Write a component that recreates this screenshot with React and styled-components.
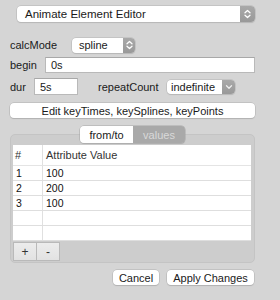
import React from "react";
import styled, { createGlobalStyle } from "styled-components";

const Global = createGlobalStyle`
  html, body { margin: 0; padding: 0; background: #d5d5d5; }
  body { font-family: "Liberation Sans", Arial, sans-serif; font-size: 11px; color: #1a1a1a; }
  * { box-sizing: border-box; }
`;

const Window = styled.div`
  width: 280px;
  height: 300px;
  background: #d5d5d5;
  padding: 5px 25px 0 10px;
  display: flex;
  flex-direction: column;
`;

const Row = styled.div`
  display: flex;
  align-items: center;
  height: ${(p) => p.$h || 17}px;
  margin-top: ${(p) => p.$mt || 0}px;
  padding-left: ${(p) => p.$pl || 0}px;
`;

const Label = styled.span`
  font-size: 11px;
  color: #1a1a1a;
  width: ${(p) => (p.$w ? `${p.$w}px` : "auto")};
  margin-left: ${(p) => p.$ml || 0}px;
  flex-shrink: 0;
`;

const Popup = styled.div`
  position: relative;
  display: flex;
  align-items: stretch;
  width: ${(p) => p.$w}px;
  height: ${(p) => p.$h || 16}px;
  background: #fff;
  border-radius: 4px;
  box-shadow: 0 0 0 0.5px #b4b4b4, 0 1px 1px rgba(0, 0, 0, 0.12);
  overflow: hidden;
`;

const PopupText = styled.span`
  flex: 1;
  display: flex;
  align-items: center;
  padding-left: ${(p) => p.$pl || 8}px;
  font-size: ${(p) => p.$fs || 11}px;
  color: #1a1a1a;
  white-space: nowrap;
`;

const PopupArrow = styled.span`
  width: ${(p) => p.$w || 14}px;
  background: linear-gradient(#a9a9a9, #999);
  display: flex;
  align-items: center;
  justify-content: center;
`;

const Input = styled.div`
  width: ${(p) => p.$w}px;
  height: ${(p) => p.$h || 16}px;
  background: #fff;
  border: 1px solid #b9b9b9;
  border-top-color: #a8a8a8;
  display: flex;
  align-items: center;
  padding-left: 5px;
  font-size: 11px;
  color: #1a1a1a;
  margin-left: ${(p) => p.$ml || 0}px;
`;

const PushButton = styled.div`
  width: ${(p) => p.$w}px;
  height: 15px;
  background: #fff;
  border-radius: 4px;
  box-shadow: 0 0 0 0.5px #b0b0b0, 0 1px 1px rgba(0, 0, 0, 0.15);
  display: flex;
  align-items: center;
  justify-content: center;
  font-size: 11px;
  color: #1a1a1a;
  margin-left: ${(p) => p.$ml || 0}px;
`;

const GroupWrap = styled.div`
  position: relative;
  margin-top: 8px;
  padding-top: 8px;
  width: 245px;
`;

const Segmented = styled.div`
  position: absolute;
  top: 0;
  left: 70px;
  display: flex;
  height: 17px;
  border-radius: 4px;
  overflow: hidden;
  box-shadow: 0 0 0 0.5px #a8a8a8, 0 1px 1px rgba(0, 0, 0, 0.12);
  z-index: 2;
`;

const Seg = styled.div`
  width: ${(p) => p.$w}px;
  display: flex;
  align-items: center;
  justify-content: center;
  font-size: 11px;
  background: ${(p) => (p.$on ? "#fff" : "#a9a9a9")};
  color: ${(p) => (p.$on ? "#1a1a1a" : "#d9d9d9")};
`;

const Group = styled.div`
  height: 129px;
  background: #cdcdcd;
  border: 1px solid #c4c4c4;
  border-radius: 5px;
  padding: 10px 3px 0 2px;
  display: flex;
  flex-direction: column;
`;

const Table = styled.div`
  width: 238px;
  background: #fff;
  display: flex;
  flex-direction: column;
`;

const TRow = styled.div`
  display: grid;
  grid-template-columns: 30px 1fr;
  height: ${(p) => p.$h || 15}px;
  border-bottom: 1px solid ${(p) => (p.$head ? "#e4e4e4" : "#dedede")};
`;

const Cell = styled.div`
  display: flex;
  align-items: center;
  padding-left: ${(p) => p.$pl || 3}px;
  font-size: ${(p) => (p.$head ? 11 : 10.5)}px;
  color: ${(p) => (p.$head ? "#333" : "#111")};
  border-right: ${(p) => (p.$first ? "1px solid #e0e0e0" : "none")};
`;

const Tools = styled.div`
  display: flex;
  margin-top: 1px;
`;

const ToolBtn = styled.div`
  width: ${(p) => p.$w}px;
  height: 19px;
  background: linear-gradient(#ececec, #e2e2e2);
  border: 1px solid #b9b9b9;
  margin-left: ${(p) => p.$ml || 0}px;
  display: flex;
  align-items: center;
  justify-content: center;
  font-size: 12px;
  color: #333;
`;

const Footer = styled.div`
  display: flex;
  justify-content: flex-end;
  width: 244px;
  margin-top: 7px;
`;

const Updown = () => (
  <svg width="7" height="10" viewBox="0 0 7 10">
    <path d="M1 3.8 L3.5 1.5 L6 3.8 M1 6.2 L3.5 8.5 L6 6.2" fill="none" stroke="#fff" strokeWidth="1.3" strokeLinecap="round" strokeLinejoin="round" />
  </svg>
);

const Down = () => (
  <svg width="8" height="6" viewBox="0 0 8 6">
    <path d="M1.5 1.8 L4 4.2 L6.5 1.8" fill="none" stroke="#eee" strokeWidth="1.3" strokeLinecap="round" strokeLinejoin="round" />
  </svg>
);

const rows = [
  ["1", "100"],
  ["2", "200"],
  ["3", "100"],
  ["", ""],
  ["", ""],
];

export default function App() {
  return (
    <>
      <Global />
      <Window>
        <Row $pl={7}>
          <Popup $w={245} $h={16}>
            <PopupText $fs={11.5}>Animate Element Editor</PopupText>
            <PopupArrow $w={15}>
              <Updown />
            </PopupArrow>
          </Popup>
        </Row>
        <Row $mt={15} $h={16}>
          <Label $w={62}>calcMode</Label>
          <Popup $w={63} $h={15}>
            <PopupText $pl={7}>spline</PopupText>
            <PopupArrow $w={12}>
              <Updown />
            </PopupArrow>
          </Popup>
        </Row>
        <Row $mt={4} $h={16}>
          <Label $w={35}>begin</Label>
          <Input $w={210}>0s</Input>
        </Row>
        <Row $mt={5} $h={17}>
          <Label $w={24}>dur</Label>
          <Input $w={44} $h={17}>5s</Input>
          <Label $ml={20} $w={69}>repeatCount</Label>
          <Popup $w={68} $h={14}>
            <PopupText $pl={4}>indefinite</PopupText>
            <PopupArrow $w={13}>
              <Down />
            </PopupArrow>
          </Popup>
        </Row>
        <Row $mt={8} $h={15}>
          <PushButton $w={245}>Edit keyTimes, keySplines, keyPoints</PushButton>
        </Row>
        <GroupWrap>
          <Segmented>
            <Seg $on $w={53}>from/to</Seg>
            <Seg $w={52}>values</Seg>
          </Segmented>
          <Group>
            <Table>
              <TRow $head $h={21}>
                <Cell $head $first $pl={2}>#</Cell>
                <Cell $head>Attribute Value</Cell>
              </TRow>
              {rows.map((r, i) => (
                <TRow key={i}>
                  <Cell $first>{r[0]}</Cell>
                  <Cell>{r[1]}</Cell>
                </TRow>
              ))}
            </Table>
            <Tools>
              <ToolBtn $w={24}>+</ToolBtn>
              <ToolBtn $w={24} $ml={-1}>-</ToolBtn>
            </Tools>
          </Group>
        </GroupWrap>
        <Footer>
          <PushButton $w={46}>Cancel</PushButton>
          <PushButton $w={87} $ml={8}>Apply Changes</PushButton>
        </Footer>
      </Window>
    </>
  );
}
